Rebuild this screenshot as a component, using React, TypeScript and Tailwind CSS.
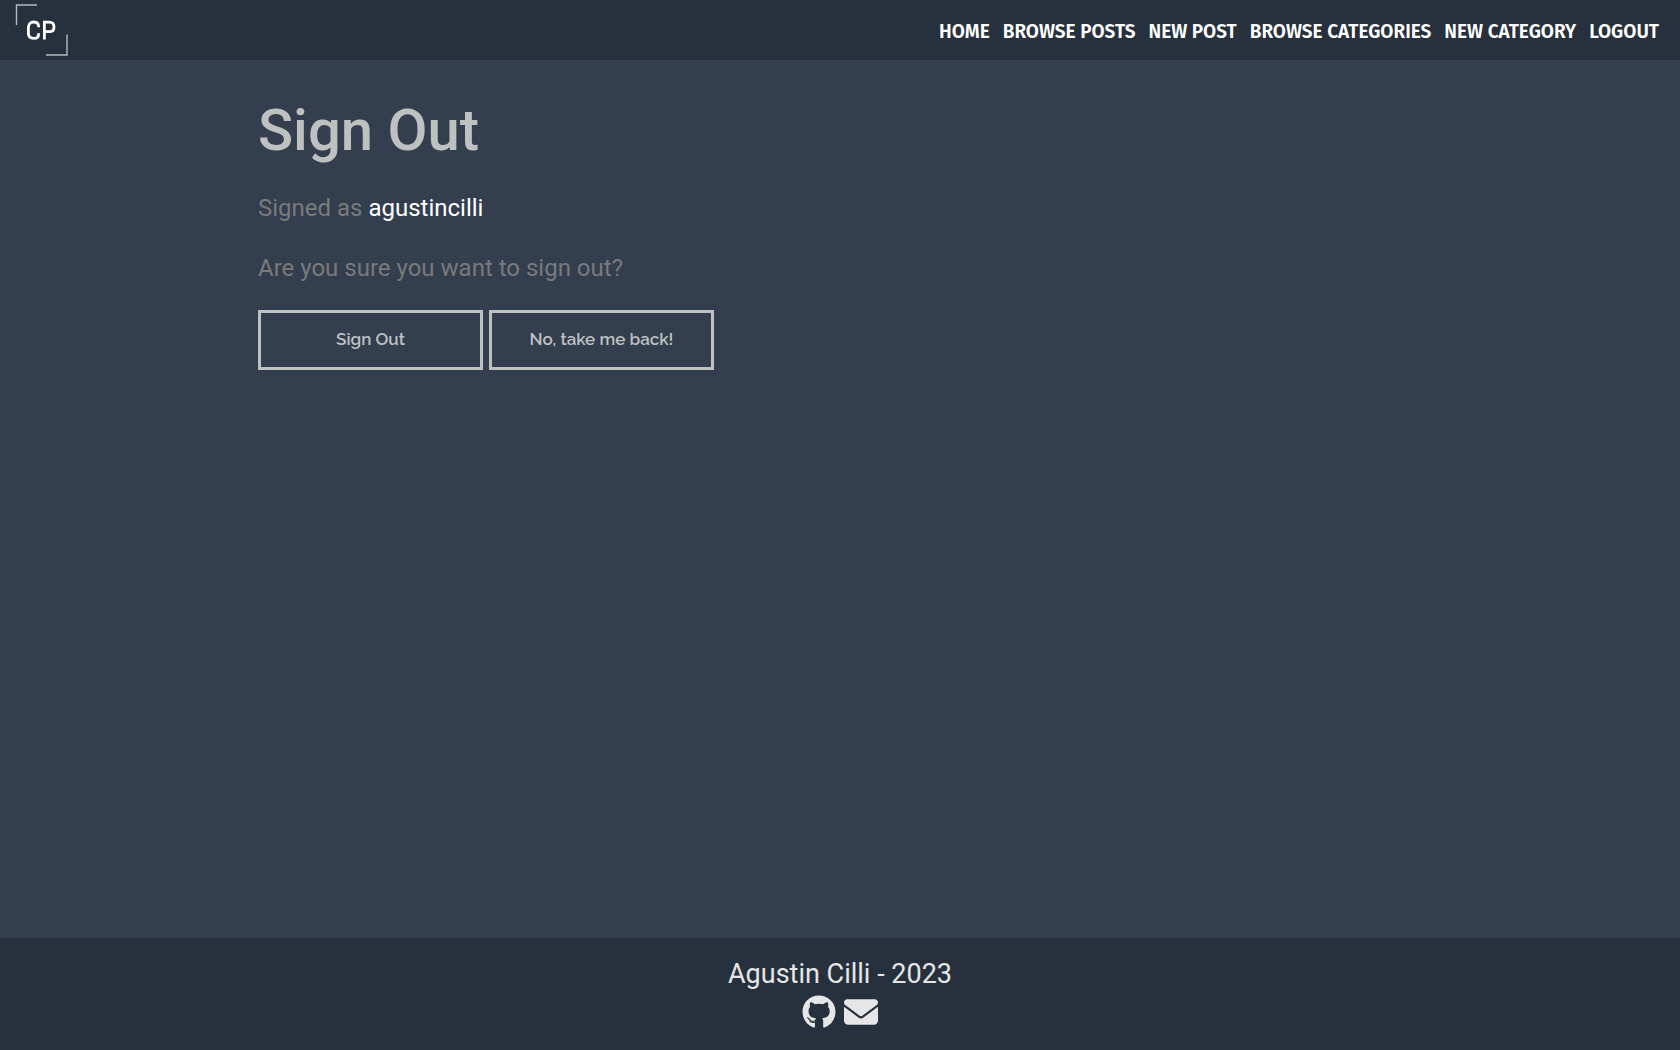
import { FaEnvelope, FaGithub } from "react-icons/fa6";

const links = ["Home", "Browse Posts", "New Post", "Browse Categories", "New Category", "Logout"];

function Logo() {
  return (
    <a href="#" aria-label="CP home" className="block">
      <svg width="54" height="54" viewBox="0 0 54 54" fill="none" aria-hidden="true">
        <path d="M1.5 22V2H22" stroke="#b4b9bd" strokeWidth="1.4" />
        <path d="M31 52H52V31.5" stroke="#b4b9bd" strokeWidth="1.4" />
        <path
          d="M23.6 24.2V23.6C23.6 20.6 21.7 19 18.8 19S13.4 20.8 13.4 24.2V30.3C13.4 33.7 15.7 35.4 18.8 35.4S23.6 33.7 23.6 30.9V30.3M29.4 36.6V19.1H34.2C37.2 19.1 39 21 39 23.9S37.2 28.7 34.2 28.7H29.4"
          stroke="white"
          strokeWidth="2.8"
        />
      </svg>
    </a>
  );
}

function OutlineButton({ children }: { children: string }) {
  return (
    <button
      type="button"
      className="h-15 w-[225px] cursor-pointer border-3 border-[#bfc1c0] pb-0.5 font-['Raleway','Lato',sans-serif] text-[17px] font-semibold text-[#bfc1c0]"
    >
      {children}
    </button>
  );
}

export default function App() {
  return (
    <div className="flex min-h-screen flex-col bg-[#333e4e] font-['Roboto',sans-serif]">
      <header className="flex h-15 items-center justify-between bg-[#27313d] pr-[21px] pl-[15px]">
        <Logo />
        <nav className="flex gap-[13px] pt-1 font-['Fira_Sans','Noto_Sans',sans-serif] text-[19px] font-semibold text-white uppercase">
          {links.map((label) => (
            <a key={label} href="#" className="whitespace-nowrap">
              {label}
            </a>
          ))}
        </nav>
      </header>

      <main className="mx-auto w-full max-w-[1164px] grow pt-10 text-2xl text-[#7a7a7a]">
        <h1 className="text-[58px] leading-[60px] font-medium text-[#bfc1c0]">Sign Out</h1>
        <p className="mt-8 leading-8">
          Signed as <span className="text-white">agustincilli</span>
        </p>
        <p className="mt-7 leading-8">Are you sure you want to sign out?</p>
        <div className="mt-[26px] flex gap-1.5">
          <OutlineButton>Sign Out</OutlineButton>
          <OutlineButton>No, take me back!</OutlineButton>
        </div>
      </main>

      <footer className="flex h-28 flex-col items-center bg-[#27313d] pt-5 text-[#e6e6e6]">
        <p className="text-[27px] leading-8">Agustin Cilli - 2023</p>
        <div className="mt-[5px] flex gap-2">
          <a href="#" aria-label="GitHub">
            <FaGithub size={34} />
          </a>
          <a href="#" aria-label="Email">
            <FaEnvelope size={34} />
          </a>
        </div>
      </footer>
    </div>
  );
}
